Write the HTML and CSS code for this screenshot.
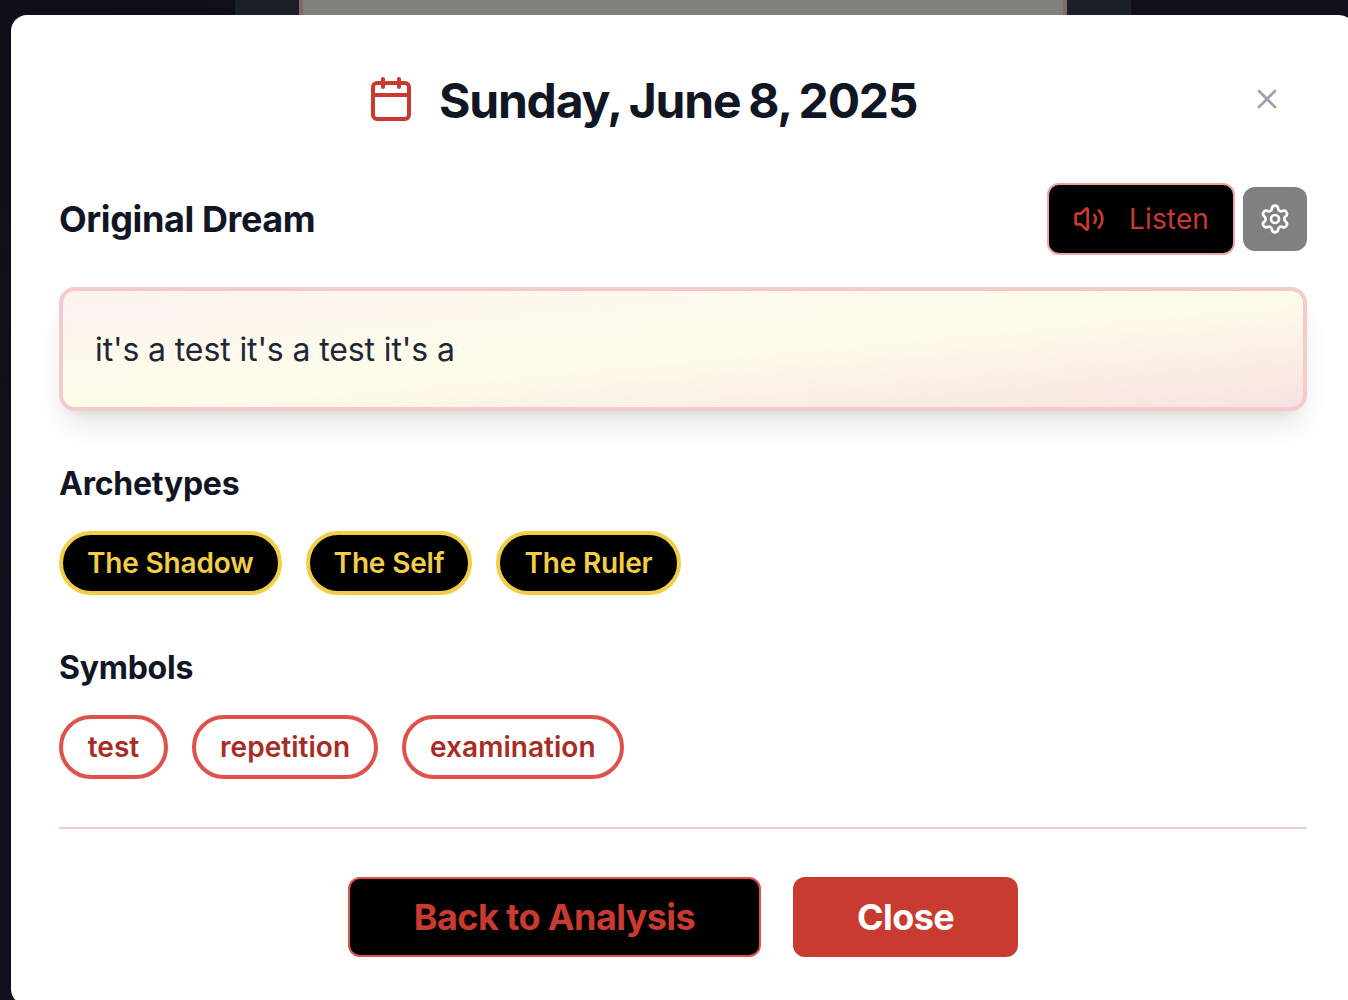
FILE: index.html
```html
<!DOCTYPE html>
<html lang="en">
<head>
<meta charset="utf-8">
<title>Dream Journal</title>
<link rel="stylesheet" href="styles.css">
</head>
<body>
<div class="page"><div class="panel"><div class="sheet"></div></div></div>
<div class="overlay">
  <main class="modal">
    <header class="header">
      <div class="heading">
        <svg class="icon icon-lg" viewBox="0 0 24 24"><path d="M8 2v4M16 2v4M3 10h18"/><rect x="3" y="4" width="18" height="18" rx="2"/></svg>
        <h1 class="title">Sunday, June 8, 2025</h1>
      </div>
      <button class="dismiss" aria-label="Close"><svg class="icon" viewBox="0 0 24 24"><path d="M18 6 6 18M6 6l12 12"/></svg></button>
    </header>

    <section class="dream">
      <div class="dream-bar">
        <h2 class="dream-title">Original Dream</h2>
        <div class="tools">
          <button class="listen">
            <svg class="icon" viewBox="0 0 24 24"><path d="M11 4.702a.705.705 0 0 0-1.203-.498L6.413 7.587A1.4 1.4 0 0 1 5.416 8H3a1 1 0 0 0-1 1v6a1 1 0 0 0 1 1h2.416a1.4 1.4 0 0 1 .997.413l3.383 3.384A.705.705 0 0 0 11 19.298z"/><path d="M16 9a5 5 0 0 1 0 6"/><path d="M19.364 18.364a9 9 0 0 0 0-12.728"/></svg>
            <span>Listen</span>
          </button>
          <button class="settings" aria-label="Settings"><svg class="icon" viewBox="0 0 24 24"><path d="M9.671 4.136a2.34 2.34 0 0 1 4.659 0 2.34 2.34 0 0 0 3.319 1.915 2.34 2.34 0 0 1 2.33 4.033 2.34 2.34 0 0 0 0 3.831 2.34 2.34 0 0 1-2.33 4.033 2.34 2.34 0 0 0-3.319 1.915 2.34 2.34 0 0 1-4.659 0 2.34 2.34 0 0 0-3.32-1.915 2.34 2.34 0 0 1-2.33-4.033 2.34 2.34 0 0 0 0-3.831A2.34 2.34 0 0 1 6.35 6.051a2.34 2.34 0 0 0 3.319-1.915"/><circle cx="12" cy="12" r="3"/></svg></button>
        </div>
      </div>
      <p class="dream-text">it's a test it's a test it's a</p>
    </section>

    <section class="group">
      <h3 class="group-title">Archetypes</h3>
      <div class="chips archetypes"><span class="chip">The Shadow</span><span class="chip">The Self</span><span class="chip">The Ruler</span></div>
    </section>

    <section class="group">
      <h3 class="group-title">Symbols</h3>
      <div class="chips symbols"><span class="chip">test</span><span class="chip">repetition</span><span class="chip">examination</span></div>
    </section>

    <footer class="footer">
      <button class="btn btn-back">Back to Analysis</button>
      <button class="btn btn-close">Close</button>
    </footer>
  </main>
</div>
</body>
</html>
```
FILE: styles.css
```css
* { box-sizing: border-box; }
body, h1, h2, h3, p { margin: 0; }
body {
  height: 1000px;
  overflow: hidden;
  font-family: Inter, "Liberation Sans", sans-serif;
  color: #111624;
  background: linear-gradient(135deg, #0e0d18, #14121f);
}
button { font: inherit; border: 0; padding: 0; background: none; display: flex; align-items: center; justify-content: center; }
.page { width: 896px; height: 1000px; margin-left: 235px; }
.panel { height: 100%; padding: 0 64px; background: #1b1f29; }
.sheet { height: 100%; background: #80807b; border: solid #836868; border-width: 0 4px; }
.overlay { position: absolute; inset: 0; overflow: hidden; padding: 15px 0 0 11px; }
.modal {
  width: 1344px;
  padding: 48px;
  border-radius: 16px;
  background: #fff;
}
.icon { width: 32px; height: 32px; flex: none; fill: none; stroke: currentColor; stroke-width: 2; stroke-linecap: round; stroke-linejoin: round; }
.icon-lg { width: 48px; height: 48px; color: #c93a31; }

.header { display: flex; height: 72px; margin-bottom: 48px; }
.heading { flex: 1; display: flex; align-items: center; justify-content: center; gap: 24px; }
.title { width: 480px; padding-top: 3px; font-size: 48px; line-height: 48px; font-weight: 700; letter-spacing: -1.2px; word-spacing: -2.2px; white-space: nowrap; }
.dismiss { width: 80px; color: #9ca1ae; }

.dream-bar { display: flex; align-items: center; justify-content: space-between; height: 72px; margin-bottom: 32px; }
.dream-title { font-size: 36px; line-height: 56px; font-weight: 700; letter-spacing: -0.4px; }
.tools { display: flex; align-items: center; gap: 8px; }
.listen {
  width: 188px;
  height: 72px;
  padding: 0 24px;
  gap: 24px;
  justify-content: flex-start;
  border: 2px solid #eda4a3;
  border-radius: 12px;
  background: #000;
  color: #c93a31;
  font-size: 28px;
  letter-spacing: 0.15px;
}
.settings { width: 64px; height: 64px; border-radius: 12px; background: #808080; color: #fff; }
.dream-text {
  padding: 33px 32px 31px;
  border: 4px solid #f5caca;
  border-radius: 16px;
  background: linear-gradient(to bottom right, #fcf2f2, #fefde9 50%, #f8e2e2);
  box-shadow: 0 20px 30px -6px rgb(0 0 0 / .1), 0 8px 12px -8px rgb(0 0 0 / .1);
  color: #1f2735;
  font-size: 32px;
  line-height: 52px;
  letter-spacing: -0.12px;
}

.group { margin-top: 48px; }
.group-title { padding-top: 1px; margin-bottom: 23px; font-size: 32px; line-height: 48px; font-weight: 700; letter-spacing: -0.25px; }
.chips { display: flex; gap: 24px; }
.chip { height: 64px; padding: 0 24px; border: 4px solid; border-radius: 32px; font-size: 28px; line-height: 56px; font-weight: 600; text-align: center; }
.archetypes .chip { background: #000; color: #f2cd46; letter-spacing: -0.17px; }
.symbols .chip { min-width: 109px; border-color: #df524c; color: #a82c25; letter-spacing: 0.04px; }

.footer { display: flex; justify-content: center; gap: 32px; margin-top: 48px; padding-top: 48px; border-top: 2px solid #f5caca; }
.btn { height: 80px; padding: 0 64px; border-radius: 12px; font-size: 36px; font-weight: 700; letter-spacing: -0.6px; }
.btn-back { border: 2px solid #df524c; background: #000; color: #c93a31; }
.btn-close { background: #c93a31; color: #fff; }
```
